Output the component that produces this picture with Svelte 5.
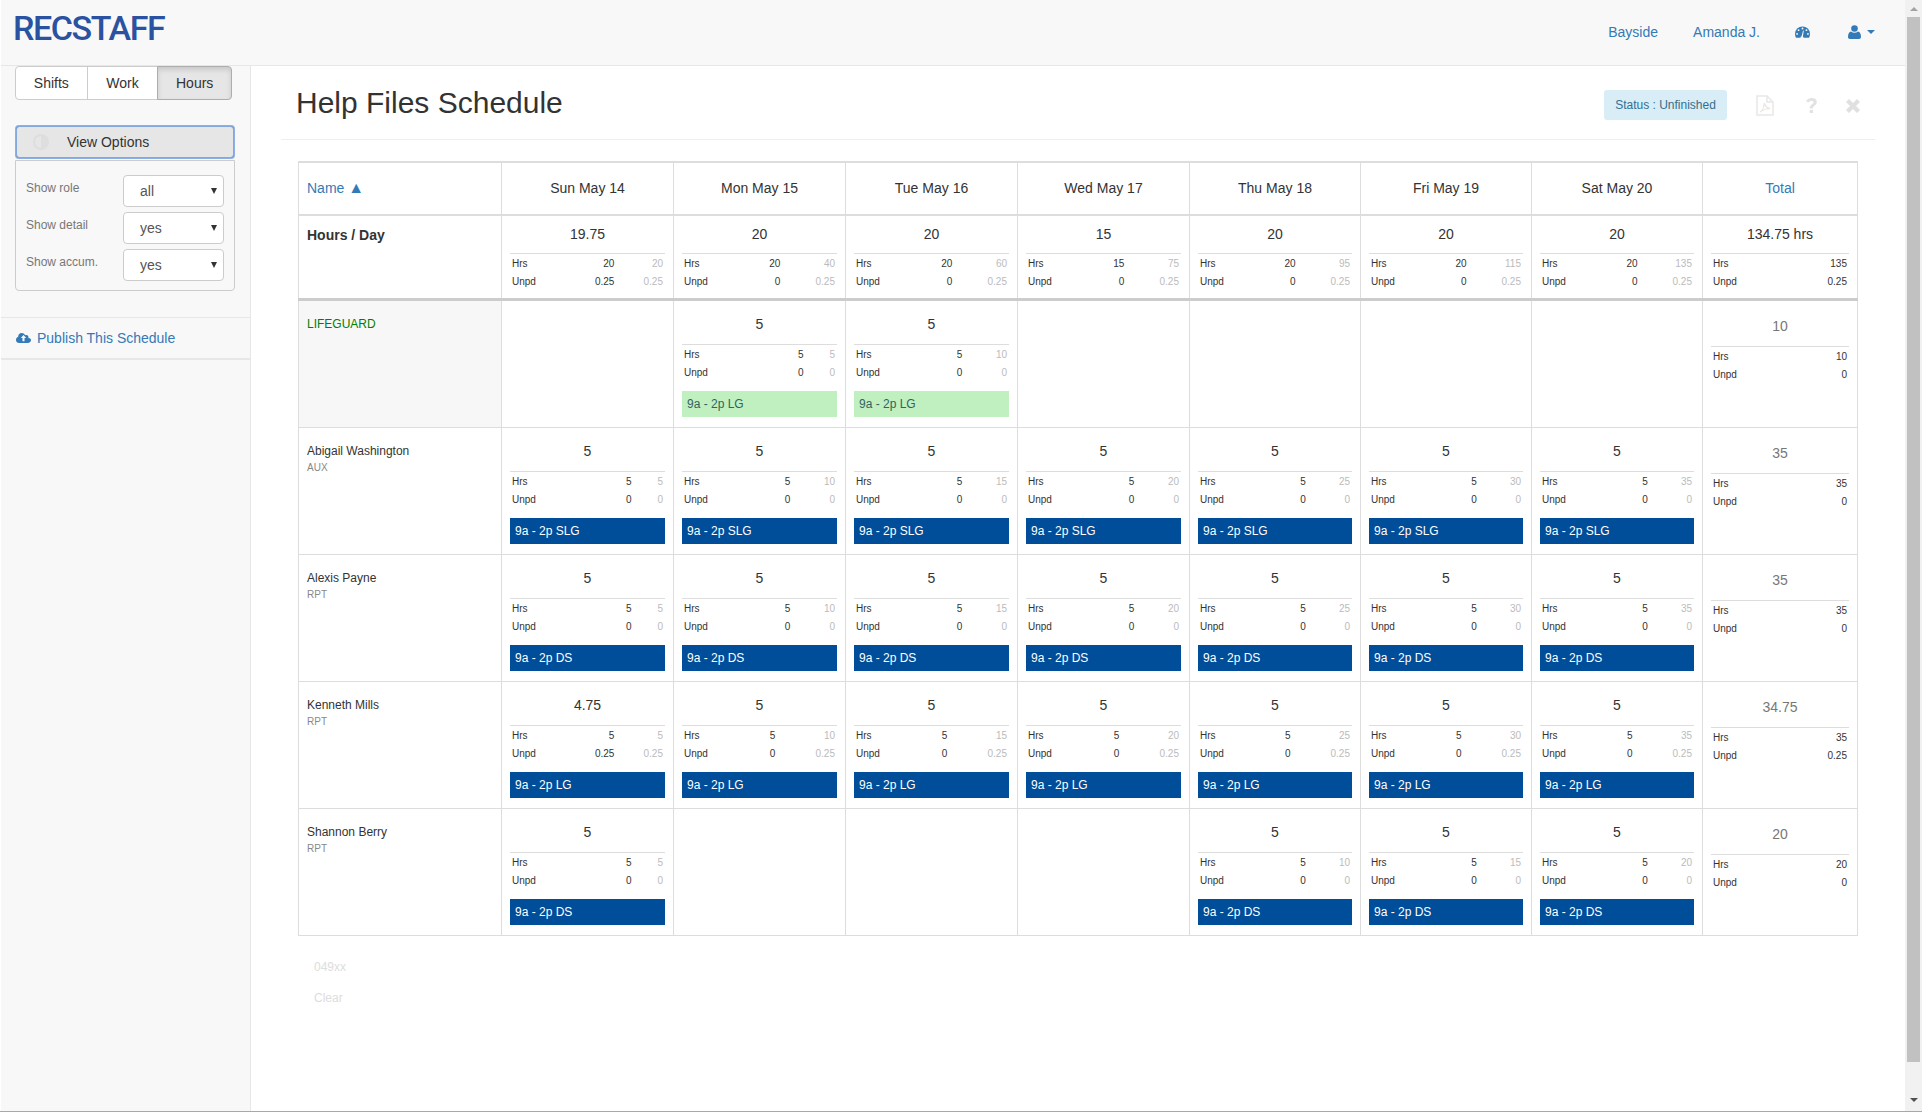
<script>
	const days = ['Sun May 14', 'Mon May 15', 'Tue May 16', 'Wed May 17', 'Thu May 18', 'Fri May 19', 'Sat May 20'];

	// one week of 5 hour shifts, accumulating across the days
	function week(label, type, skip = []) {
		let acc = 0;
		return days.map((_, i) => {
			if (skip.includes(i)) return null;
			acc += 5;
			return { num: 5, hrs: 5, hrsAcc: acc, unpd: 0, unpdAcc: 0, shift: label, type };
		});
	}

	const summary = [
		{ num: '19.75', hrs: 20, hrsAcc: 20, unpd: 0.25, unpdAcc: 0.25 },
		{ num: '20', hrs: 20, hrsAcc: 40, unpd: 0, unpdAcc: 0.25 },
		{ num: '20', hrs: 20, hrsAcc: 60, unpd: 0, unpdAcc: 0.25 },
		{ num: '15', hrs: 15, hrsAcc: 75, unpd: 0, unpdAcc: 0.25 },
		{ num: '20', hrs: 20, hrsAcc: 95, unpd: 0, unpdAcc: 0.25 },
		{ num: '20', hrs: 20, hrsAcc: 115, unpd: 0, unpdAcc: 0.25 },
		{ num: '20', hrs: 20, hrsAcc: 135, unpd: 0, unpdAcc: 0.25 }
	];

	const kenneth = week('9a - 2p LG', 'blue').map((c, i) => ({
		...c,
		num: i === 0 ? 4.75 : 5,
		unpd: i === 0 ? 0.25 : 0,
		unpdAcc: 0.25
	}));

	const rows = [
		{
			name: 'LIFEGUARD',
			group: true,
			cells: week('9a - 2p LG', 'green', [0, 3, 4, 5, 6]),
			total: { num: 10, hrs: 10, unpd: 0 }
		},
		{ name: 'Abigail Washington', role: 'AUX', cells: week('9a - 2p SLG', 'blue'), total: { num: 35, hrs: 35, unpd: 0 } },
		{ name: 'Alexis Payne', role: 'RPT', cells: week('9a - 2p DS', 'blue'), total: { num: 35, hrs: 35, unpd: 0 } },
		{ name: 'Kenneth Mills', role: 'RPT', cells: kenneth, total: { num: 34.75, hrs: 35, unpd: 0.25 } },
		{ name: 'Shannon Berry', role: 'RPT', cells: week('9a - 2p DS', 'blue', [1, 2, 3]), total: { num: 20, hrs: 20, unpd: 0 } }
	];

	const options = [
		{ label: 'Show role', value: 'all' },
		{ label: 'Show detail', value: 'yes' },
		{ label: 'Show accum.', value: 'yes' }
	];
</script>

{#snippet detail(c)}
	<table class="detail">
		<tbody>
			<tr>
				<td>Hrs</td>
				<td class="val">{c.hrs}</td>
				{#if c.hrsAcc !== undefined}<td class="val acc">{c.hrsAcc}</td>{/if}
			</tr>
			<tr>
				<td>Unpd</td>
				<td class="val">{c.unpd}</td>
				{#if c.unpdAcc !== undefined}<td class="val acc">{c.unpdAcc}</td>{/if}
			</tr>
		</tbody>
	</table>
{/snippet}

<div class="shell">
	<div class="page">
		<header class="navbar">
			<span class="brand">RECSTAFF</span>
			<nav class="nav-links">
				<span class="nav-link">Bayside</span>
				<span class="nav-link">Amanda J.</span>
				<svg class="gauge" viewBox="0 0 16 12" width="15" height="12">
					<path fill="#337ab7" d="M8 0a8 8 0 0 0-8 8c0 1.500.4 2.900 1.100 4h13.800A8 8 0 0 0 16 8a8 8 0 0 0-8-8z" />
					<g fill="#f8f8f8">
						<circle cx="8" cy="2.200" r="1" />
						<circle cx="3.800" cy="4" r="1" />
						<circle cx="2.200" cy="8" r="1" />
						<circle cx="13.800" cy="8" r="1" />
						<circle cx="12.200" cy="4" r="1" />
						<path d="M7 10.500 8.600 4.500l.8.200L8.400 10.800A1.500 1.500 0 1 1 7 10.500z" />
					</g>
				</svg>
				<span class="user">
					<svg viewBox="0 0 13 14" width="13" height="14">
						<circle cx="6.500" cy="3.500" r="3.300" fill="#337ab7" />
						<path fill="#337ab7" d="M0 12c0-3.500 1.400-5.300 3-5.500 1 .8 2.200 1.200 3.500 1.200S9 7.300 10 6.500c1.600.2 3 2 3 5.500 0 1.300-.8 2-2 2H2c-1.200 0-2-.7-2-2z" />
					</svg>
					<i class="caret"></i>
				</span>
			</nav>
		</header>

		<div class="body">
			<aside class="sidebar">
				<div class="tabs">
					<button class="tab tab-shifts">Shifts</button>
					<button class="tab tab-work">Work</button>
					<button class="tab tab-hours active">Hours</button>
				</div>

				<button class="view-btn">
					<svg viewBox="0 0 16 16" width="16" height="16">
						<circle cx="8" cy="8" r="8" fill="#dedede" />
						<path d="M8 2a6 6 0 0 0 0 12z" fill="#e6e6e6" />
					</svg>
					View Options
				</button>
				<div class="options">
					{#each options as opt}
						<div class="option">
							<span class="option-label">{opt.label}</span>
							<span class="select-wrap">
								<select class="option-select">
									<option>{opt.value}</option>
								</select>
							</span>
						</div>
					{/each}
				</div>

				<div class="publish">
					<svg viewBox="0 0 15 12" width="15" height="12">
						<path fill="#337ab7" d="M12.300 5.100C12.400 4.800 12.500 4.500 12.500 4.200 12.500 2.900 11.500 2 10.300 2c-.4 0-.8.100-1.200.300C8.500.9 7.200 0 5.700 0 3.700 0 2.200 1.500 2.200 3.400v.4C.9 4.300 0 5.500 0 6.900 0 8.600 1.400 10 3.200 10h8.700C13.600 10 15 8.700 15 7.100c0-1-.6-1.600-2.700-2z" transform="translate(0 1)" />
						<path fill="#f8f8f8" d="M7.500 3 4.800 6h1.700v3.200h2V6h1.700z" />
					</svg>
					<span>Publish This Schedule</span>
				</div>
			</aside>

			<main class="main">
				<div class="head">
					<h2 class="title">Help Files Schedule</h2>
					<div class="actions">
						<div class="status">Status : Unfinished</div>
						<svg class="pdf" viewBox="0 0 18 21" width="18" height="21">
							<path fill="none" stroke="#e8e8e8" stroke-width="1.500" d="M1 1h10l6 6v13H1z" />
							<path fill="none" stroke="#e8e8e8" stroke-width="1.500" d="M11 1v6h6" />
							<path fill="none" stroke="#ece4e0" stroke-width="1.100" d="M4 17c2-1 4-5 4.200-9 .8 3 2.500 5 6 5.500-3.500 0-7 1-10.200 3.500z" />
						</svg>
						<svg class="help" viewBox="0 0 11 15" width="11" height="15">
							<path fill="#e2e2e2" d="M3.800 10.600h3.100v-.9c0-.7.400-1.100 1.400-1.800 1.400-.9 2.500-1.900 2.500-3.800C10.800 1.500 8.800 0 5.800 0 3.300 0 1.400 1 0 3l2.200 1.600c.8-1 1.700-1.700 3.200-1.700 1.300 0 2.200.6 2.200 1.400 0 .8-.6 1.200-1.600 1.900-1.300.9-2.200 1.900-2.200 3.400zM3.700 15h3.300v-3H3.700z" />
						</svg>
						<svg class="close" viewBox="0 0 14 14" width="14" height="14">
							<path fill="#e0e0e0" d="M3 0 7 4l4-4 3 3-4 4 4 4-3 3-4-4-4 4-3-3 4-4-4-4z" />
						</svg>
					</div>
				</div>

				<table class="schedule">
					<colgroup>
						<col style="width: 203px" />
						{#each [172, 172, 172, 172, 171, 171, 171] as w}
							<col style="width: {w}px" />
						{/each}
						<col style="width: 155px" />
					</colgroup>
					<thead>
						<tr>
							<th class="name-head">Name <span class="sort">▲</span></th>
							{#each days as day}
								<th>{day}</th>
							{/each}
							<th class="total-head">Total</th>
						</tr>
					</thead>
					<tbody>
						<tr class="summary">
							<td class="name-cell"><strong>Hours / Day</strong></td>
							{#each summary as c}
								<td>
									<div class="num">{c.num}</div>
									{@render detail(c)}
								</td>
							{/each}
							<td>
								<div class="num">134.75 hrs</div>
								{@render detail({ hrs: 135, unpd: 0.25 })}
							</td>
						</tr>
						{#each rows as row, i}
							<tr class="person" class:first={i === 0}>
								<td class="name-cell" class:group={row.group}>
									<div class="name">{row.name}</div>
									{#if row.role}<div class="role">{row.role}</div>{/if}
								</td>
								{#each row.cells as c}
									<td>
										{#if c}
											<div class="num">{c.num}</div>
											{@render detail(c)}
											<div class="shift {c.type}">{c.shift}</div>
										{/if}
									</td>
								{/each}
								<td class="total">
									<div class="num">{row.total.num}</div>
									{@render detail(row.total)}
								</td>
							</tr>
						{/each}
					</tbody>
				</table>

				<div class="foot-note">049xx</div>
				<div class="foot-note">Clear</div>
			</main>
		</div>
	</div>

	<div class="scrollbar">
		<span class="arrow up"></span>
		<div class="thumb"></div>
		<span class="arrow down"></span>
	</div>
</div>

<style>
	:global(body) {
		margin: 0;
		background: #fff;
		overflow: hidden;
	}

	.shell {
		display: flex;
		width: 1922px;
		height: 1111px;
		border-bottom: 1px solid #a8a8a8;
		font-family: 'Liberation Sans', Arial, sans-serif;
		font-size: 14px;
		color: #333;
		overflow: hidden;
	}

	.page {
		width: 1905px;
		display: flex;
		flex-direction: column;
		border-left: 1px solid #fff;
		box-sizing: border-box;
	}

	.navbar {
		height: 66px;
		flex: none;
		box-sizing: border-box;
		background: #f8f8f8;
		border-bottom: 1px solid #e7e7e7;
		display: flex;
		align-items: center;
		justify-content: space-between;
		padding: 0 30px 0 12px;
	}

	.brand {
		font-family: Roboto, sans-serif;
		font-weight: 500;
		font-size: 34px;
		color: #2a52a0;
		letter-spacing: -1.4px;
		margin-top: -9px;
	}

	.nav-links {
		display: flex;
		align-items: center;
		color: #337ab7;
		margin-top: -2px;
	}

	.nav-link {
		margin-right: 35px;
	}

	.gauge {
		margin-right: 38px;
	}

	.user {
		display: flex;
		align-items: center;
		gap: 6px;
	}

	.caret {
		width: 0;
		height: 0;
		border-top: 4px solid #337ab7;
		border-left: 4px solid transparent;
		border-right: 4px solid transparent;
	}

	.body {
		flex: 1;
		display: flex;
		min-height: 0;
	}

	.sidebar {
		width: 250px;
		flex: none;
		box-sizing: border-box;
		background: #f8f8f8;
		border-right: 1px solid #e7e7e7;
	}

	.tabs {
		display: flex;
		margin: 0 0 0 14px;
		width: 217px;
	}

	.tab {
		height: 34px;
		background: #fff;
		border: 1px solid #ccc;
		font: inherit;
		color: #333;
		padding: 0;
	}

	.tab-shifts {
		width: 73px;
		border-radius: 4px 0 0 4px;
	}

	.tab-work {
		width: 72px;
		margin-left: -1px;
	}

	.tab-hours {
		width: 75px;
		margin-left: -1px;
		border-radius: 0 4px 4px 0;
	}

	.tab.active {
		background: #e6e6e6;
		border-color: #adadad;
		box-shadow: inset 0 3px 5px rgba(0, 0, 0, 0.125);
	}

	.view-btn {
		display: flex;
		align-items: center;
		gap: 18px;
		margin: 26px 0 0 15px;
		width: 218px;
		height: 32px;
		box-sizing: border-box;
		padding: 0 0 0 16px;
		background: #e6e6e6;
		border: 1px solid #8c8c8c;
		border-radius: 3px;
		outline: 1px solid #82a8e0;
		outline-offset: -1px;
		box-shadow: 0 0 0 1px #8cb0e6;
		font: inherit;
		color: #333;
	}

	.options {
		margin: 2px 0 0 14px;
		width: 220px;
		height: 131px;
		box-sizing: border-box;
		border: 1px solid #ccc;
		border-radius: 0 0 4px 4px;
		padding: 14px 10px 0 10px;
		display: flex;
		flex-direction: column;
		gap: 5px;
	}

	.option {
		display: flex;
		justify-content: space-between;
		align-items: flex-start;
	}

	.option-label {
		font-size: 12px;
		color: #777;
		padding-top: 6px;
	}

	.select-wrap {
		position: relative;
		display: block;
		height: 32px;
	}

	.select-wrap::after {
		content: '';
		position: absolute;
		right: 7px;
		top: 13px;
		border-top: 6px solid #333;
		border-left: 3px solid transparent;
		border-right: 3px solid transparent;
		pointer-events: none;
	}

	.option-select {
		display: block;
		width: 101px;
		height: 32px;
		appearance: none;
		background: #fff;
		border: 1px solid #ccc;
		border-radius: 4px;
		padding: 0 8px 0 16px;
		font: inherit;
		color: #555;
	}

	.publish {
		margin-top: 26px;
		height: 43px;
		box-sizing: border-box;
		border-top: 1px solid #e7e7e7;
		border-bottom: 2px solid #e7e7e7;
		padding-left: 15px;
		display: flex;
		align-items: center;
		gap: 6px;
		color: #337ab7;
	}

	.main {
		flex: 1;
		background: #fff;
		padding: 0 30px;
		min-width: 0;
	}

	.head {
		height: 74px;
		box-sizing: border-box;
		border-bottom: 1px solid #eee;
		display: flex;
		justify-content: space-between;
		align-items: center;
		padding: 0 0 0 15px;
	}

	.title {
		margin: 0;
		font-size: 30px;
		font-weight: 500;
		line-height: 33px;
		color: #333;
	}

	.actions {
		display: flex;
		align-items: center;
		margin-top: 6px;
	}

	.status {
		width: 123px;
		height: 30px;
		box-sizing: border-box;
		background: #d9edf7;
		color: #31708f;
		font-size: 12px;
		line-height: 30px;
		text-align: center;
		border-radius: 3px;
		margin-right: 29px;
		margin-top: -2px;
	}

	.pdf {
		margin-right: 32px;
	}

	.help {
		margin-right: 29px;
	}

	.close {
		margin-right: 15px;
	}

	.schedule {
		margin: 21px 0 0 17px;
		width: 1559px;
		table-layout: fixed;
		border-collapse: collapse;
		border: 1px solid #ddd;
		border-top-width: 2px;
	}

	.schedule > thead th {
		height: 49px;
		padding: 0 8px 2px;
		font-size: 14px;
		font-weight: 400;
		color: #333;
		text-align: center;
		border: 1px solid #ddd;
		border-top: 0;
		border-bottom: 2px solid #ddd;
	}

	.schedule > thead .name-head {
		text-align: left;
		font-size: 14px;
		color: #337ab7;
	}

	.sort {
		font-size: 16px;
		line-height: 1;
	}

	.schedule > thead .total-head {
		color: #337ab7;
	}

	.schedule > tbody > tr > td {
		border: 1px solid #ddd;
		padding: 13px 8px 0;
		vertical-align: top;
	}

	.summary {
		height: 84px;
	}

	.schedule > tbody > .summary > td {
		padding-top: 8px;
		border-bottom: 3px solid #ccc;
	}

	.schedule > tbody > .summary .num {
		margin-bottom: 9px;
	}

	.person {
		height: 127px;
	}

	.person.first {
		height: 128px;
	}

	.schedule > tbody > tr > .name-cell {
		font-size: 12px;
		padding: 15px 8px 0;
	}

	.schedule > tbody > tr > .name-cell.group {
		padding-top: 15px;
	}

	.schedule > tbody > .summary > .name-cell {
		font-size: 14px;
		padding-top: 11px;
	}

	.group {
		background: #f7f7f7;
		color: #008000;
	}

	.name {
		line-height: 16px;
	}

	.role {
		font-size: 10px;
		color: #888;
		line-height: 12px;
		margin-top: 3px;
	}

	.num {
		font-size: 14px;
		line-height: 20px;
		text-align: center;
		margin-bottom: 10px;
	}

	.detail {
		width: 100%;
		border-collapse: collapse;
		border-top: 1px solid #ddd;
		font-size: 10px;
	}

	.detail td {
		padding: 2px;
		line-height: 14px;
	}

	.detail tr:first-child td {
		padding-top: 3px;
	}

	.val {
		text-align: right;
	}

	.acc {
		color: #bbb;
	}

	.shift {
		margin-top: 9px;
		height: 26px;
		line-height: 26px;
		padding-left: 5px;
		font-size: 12px;
	}

	.shift.blue {
		background: #004d99;
		color: #fff;
	}

	.shift.green {
		background: #c0f0c0;
		color: #33635f;
	}

	.schedule > tbody > tr > .total {
		padding-top: 15px;
	}

	.total .num {
		color: #777;
	}

	.foot-note {
		margin: 0 0 0 33px;
		font-size: 12px;
		color: #ddd;
		line-height: 31px;
	}

	.schedule + .foot-note {
		margin-top: 16px;
	}

	.scrollbar {
		width: 17px;
		flex: none;
		background: #f1f1f1;
		display: flex;
		flex-direction: column;
		align-items: center;
	}

	.thumb {
		width: 13px;
		height: 1045px;
		background: #c1c1c1;
		margin-top: 6px;
	}

	.arrow {
		width: 0;
		height: 0;
		border-left: 4px solid transparent;
		border-right: 4px solid transparent;
	}

	.arrow.up {
		border-bottom: 4px solid #a3a3a3;
		margin-top: 7px;
	}

	.arrow.down {
		border-top: 4px solid #505050;
		margin-top: 36px;
	}
</style>
